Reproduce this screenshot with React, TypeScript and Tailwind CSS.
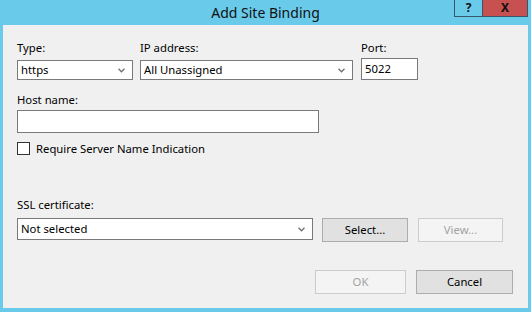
import React from 'react'

const font = { fontFamily: '"Noto Sans", "Open Sans", Arial, sans-serif' }

function Chevron() {
  return (
    <svg width="7" height="5" viewBox="0 0 7 5" className="shrink-0">
      <path d="M0.5 0.8 L3.5 3.8 L6.5 0.8" fill="none" stroke="#707070" strokeWidth="1.3" />
    </svg>
  )
}

function Select({ value, className }: { value: string; className: string }) {
  return (
    <div className={['flex items-center justify-between border border-[#7a7a7a] bg-white pl-[3px] pr-[7px] text-[11.3px] text-black', className].join(' ')}>
      <span className="leading-none">{value}</span>
      <Chevron />
    </div>
  )
}

function Button({ label, disabled, className }: { label: string; disabled?: boolean; className: string }) {
  return (
    <button
      type="button"
      className={[
        'flex h-[24px] items-center justify-center border text-[11.3px]',
        disabled ? 'border-[#cccccc] bg-[#f4f4f4] text-[#a3a3a3]' : 'border-[#adadad] bg-[#e1e1e1] text-black',
        className
      ].join(' ')}
    >
      {label}
    </button>
  )
}

export default function App() {
  return (
    <div className="flex h-[312px] w-[531px] flex-col bg-[#69caea]" style={font}>
      <div className="relative flex h-[25px] shrink-0 items-center justify-center">
        <span className="pb-[1px] text-[14px] text-[#111111]">Add Site Binding</span>
        <div className="absolute right-[3px] top-0 flex h-[17px] border border-t-0 border-[#35566b]">
          <div className="flex w-[27px] items-center justify-center text-[12px] font-bold leading-[14px] text-[#111111]">?</div>
          <div className="flex w-[45px] items-center justify-center border-l border-[#35566b] bg-[#c75050] text-[12px] font-bold leading-[14px] text-[#111111]">X</div>
        </div>
      </div>

      <div className="mx-[3px] h-[283px] bg-[#f0f0f0] pl-[14px] pt-[15px] text-[11.3px] text-black">
        <div className="flex">
          <div className="flex w-[116px] flex-col">
            <span className="h-[16px] leading-[16px]">Type:</span>
            <Select value="https" className="mt-[4px] h-[20px]" />
          </div>
          <div className="ml-[7px] flex w-[213px] flex-col">
            <span className="h-[16px] leading-[16px]">IP address:</span>
            <Select value="All Unassigned" className="mt-[4px] h-[20px]" />
          </div>
          <div className="ml-[8px] flex w-[57px] flex-col">
            <span className="h-[16px] leading-[16px]">Port:</span>
            <div className="mt-[2px] flex h-[22px] items-center border border-[#7a7a7a] bg-white pl-[3px] leading-none">5022</div>
          </div>
        </div>

        <div className="mt-[12px] h-[16px] leading-[16px]">Host name:</div>
        <div className="mt-[2px] h-[23px] w-[302px] border border-[#7a7a7a] bg-white" />

        <div className="mt-[9px] flex h-[13px] items-center">
          <div className="h-[13px] w-[13px] border border-[#333333] bg-white" />
          <span className="ml-[6px] leading-none">Require Server Name Indication</span>
        </div>

        <div className="mt-[42px] h-[16px] leading-[16px]">SSL certificate:</div>
        <div className="mt-[5px] flex items-start">
          <Select value="Not selected" className="h-[22px] w-[296px]" />
          <Button label="Select..." className="ml-[9px] w-[86px]" />
          <Button label="View..." disabled className="ml-[10px] w-[85px]" />
        </div>

        <div className="mt-[28px] flex justify-end gap-[10px] pr-[15px]">
          <Button label="OK" disabled className="w-[91px]" />
          <Button label="Cancel" className="w-[97px]" />
        </div>
      </div>
    </div>
  )
}
